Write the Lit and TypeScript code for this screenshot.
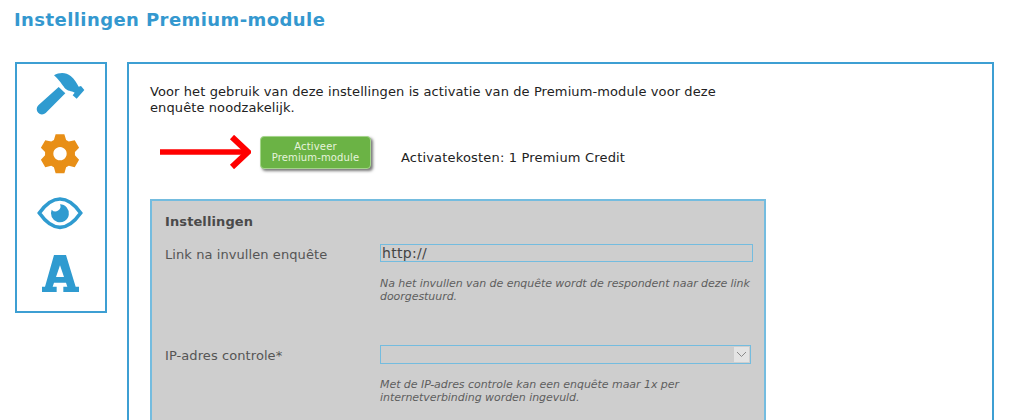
import { LitElement, html, css } from "lit";
import { customElement } from "lit/decorators.js";

function gearPath(cx: number, cy: number): string {
  const pts: string[] = [];
  const pol = (r: number, a: number) => `${(cx + r * Math.sin(a)).toFixed(1)} ${(cy - r * Math.cos(a)).toFixed(1)}`;
  for (let i = 0; i < 6; i++) {
    const a = (i * Math.PI) / 3;
    pts.push(pol(45, a - 0.42), pol(60, a - 0.22), pol(60, a + 0.22), pol(45, a + 0.42));
  }
  return `M${pts.join(" L")} Z M${cx} ${cy - 20} a20 20 0 1 0 0.01 0 Z`;
}

@customElement("app-root")
export class AppRoot extends LitElement {
  static styles = css`
    :host { display: block; width: 1024px; height: 420px; overflow: hidden; background: #fff; font-family: "DejaVu Sans", Verdana, sans-serif; color: #222; }
    h1 { margin: 0; padding: 10px 0 0 14px; height: 51px; box-sizing: border-box; font-size: 18px; line-height: 19px; letter-spacing: 0.42px; font-weight: 700; color: #3498cf; }
    .row { display: flex; align-items: flex-start; gap: 20px; padding: 11px 0 0 15px; }
    .side { width: 92px; height: 251px; box-sizing: border-box; border: 2px solid #3d9fd3; display: flex; flex-direction: column; align-items: flex-start; padding: 4px 0 0 13px; }
    .side svg { display: block; flex: none; }
    .gear { margin-top: 5px; }
    .eye { margin-top: 7px; }
    .letter { margin-top: 8px; }
    .main { width: 867px; height: 500px; box-sizing: border-box; border: 2px solid #3d9fd3; padding: 20px 21px; }
    .intro { margin: 0; width: 600px; font-size: 13px; line-height: 16px; letter-spacing: 0.1px; }
    .act { display: flex; align-items: center; margin-top: 16px; height: 40px; }
    .arrow { margin: 0 9px 0 10px; display: block; }
    .btn { width: 111px; height: 33px; box-sizing: border-box; background: #6bb345; border: 1px solid #a5d58b; border-radius: 4px; box-shadow: 2px 2px 3px #777; color: #e6f3dd; font-size: 10px; line-height: 11.5px; letter-spacing: 0.15px; text-align: center; padding-top: 4px; }
    .cost { margin: 10px 0 0 30px; font-size: 13px; letter-spacing: 0.18px; }
    .panel { margin-top: 27px; width: 616px; height: 400px; box-sizing: border-box; border: 2px solid #74bcdf; background: #cecece; padding: 13px 13px; color: #555; }
    h2 { margin: 0; font-size: 13px; line-height: 16px; font-weight: 700; letter-spacing: 0.1px; color: #4a4a4a; }
    .f { display: grid; grid-template-columns: 215px 373px; }
    .f1 { margin-top: 14px; }
    .f2 { margin-top: 42px; }
    .lab { font-size: 13px; line-height: 17px; padding-top: 2px; letter-spacing: 0.08px; color: #555; }
    .input { height: 18px; box-sizing: border-box; border: 1px solid #74bcdf; font-size: 14px; line-height: 16px; letter-spacing: 0.3px; padding-left: 1px; color: #444; }
    .select { width: 371px; height: 19px; box-sizing: border-box; border: 1px solid #74bcdf; display: flex; justify-content: flex-end; padding: 1px; }
    .chev { width: 15px; background: #e4e4e4; display: flex; align-items: center; justify-content: center; }
    .hint { grid-column: 2; margin: 14px 0 0; font-size: 11px; line-height: 13px; letter-spacing: -0.05px; font-style: italic; color: #5e5e5e; }
  `;

  render() {
    return html`
      <h1>Instellingen Premium-module</h1>
      <div class="row">
        <div class="side">
          <svg width="60" height="55" viewBox="0 0 180 165"><path fill="#2f9bd0" d="M72 22 C88 12 108 12 122 24 C134 34 140 46 146 56 L153 54 L163 66 L140 92 L128 82 L134 74 C124 68 112 70 104 60 C96 50 88 36 72 22 Z"/><path fill="#2f9bd0" d="M86 57 L106 76 L47 135 A14 14 0 0 1 25 112 Z"/></svg>
          <svg class="gear" width="60" height="55" viewBox="0 0 180 165"><path fill="#e88f17" fill-rule="evenodd" d=${gearPath(90, 77)}/></svg>
          <svg class="eye" width="60" height="50" viewBox="0 0 180 150"><path fill="none" stroke="#2f9bd0" stroke-width="11" d="M28 69 C50 38 70 27 90 27 S130 38 152 69 C130 100 110 112 90 112 S50 100 28 69 Z"/><path fill="#2f9bd0" d="M90 43 A27 27 0 1 1 65 59 A15 15 0 0 0 90 43 Z"/></svg>
          <svg class="letter" width="60" height="50" viewBox="0 0 180 150"><path fill="#2f9bd0" fill-rule="evenodd" d="M72 21 H108 L137 116 H147 V132 H100 V116 H112 L108 104 H72 L68 116 H80 V132 H36 V116 H45 Z M90 52 L78 87 H102 Z"/></svg>
        </div>
        <div class="main">
          <p class="intro">Voor het gebruik van deze instellingen is activatie van de Premium-module voor deze enquête noodzakelijk.</p>
          <div class="act">
            <svg class="arrow" width="91" height="34" viewBox="0 0 91 34"><path fill="none" stroke="#f00" stroke-width="5.500" d="M0 17 H87"/><path fill="none" stroke="#f00" stroke-width="6" d="M72 2 L88 17 L72 32"/></svg>
            <div class="btn">Activeer<br />Premium-module</div>
            <div class="cost">Activatekosten: 1 Premium Credit</div>
          </div>
          <div class="panel">
            <h2>Instellingen</h2>
            <div class="f f1">
              <div class="lab">Link na invullen enquête</div>
              <div class="input">http://</div>
              <p class="hint">Na het invullen van de enquête wordt de respondent naar deze link doorgestuurd.</p>
            </div>
            <div class="f f2">
              <div class="lab">IP-adres controle*</div>
              <div class="select"><div class="chev"><svg width="11" height="7" viewBox="0 0 11 7"><path fill="none" stroke="#8a8a8a" d="M1 1 L5.500 5.500 L10 1"/></svg></div></div>
              <p class="hint">Met de IP-adres controle kan een enquête maar 1x per internetverbinding worden ingevuld.</p>
            </div>
          </div>
        </div>
      </div>
    `;
  }
}
